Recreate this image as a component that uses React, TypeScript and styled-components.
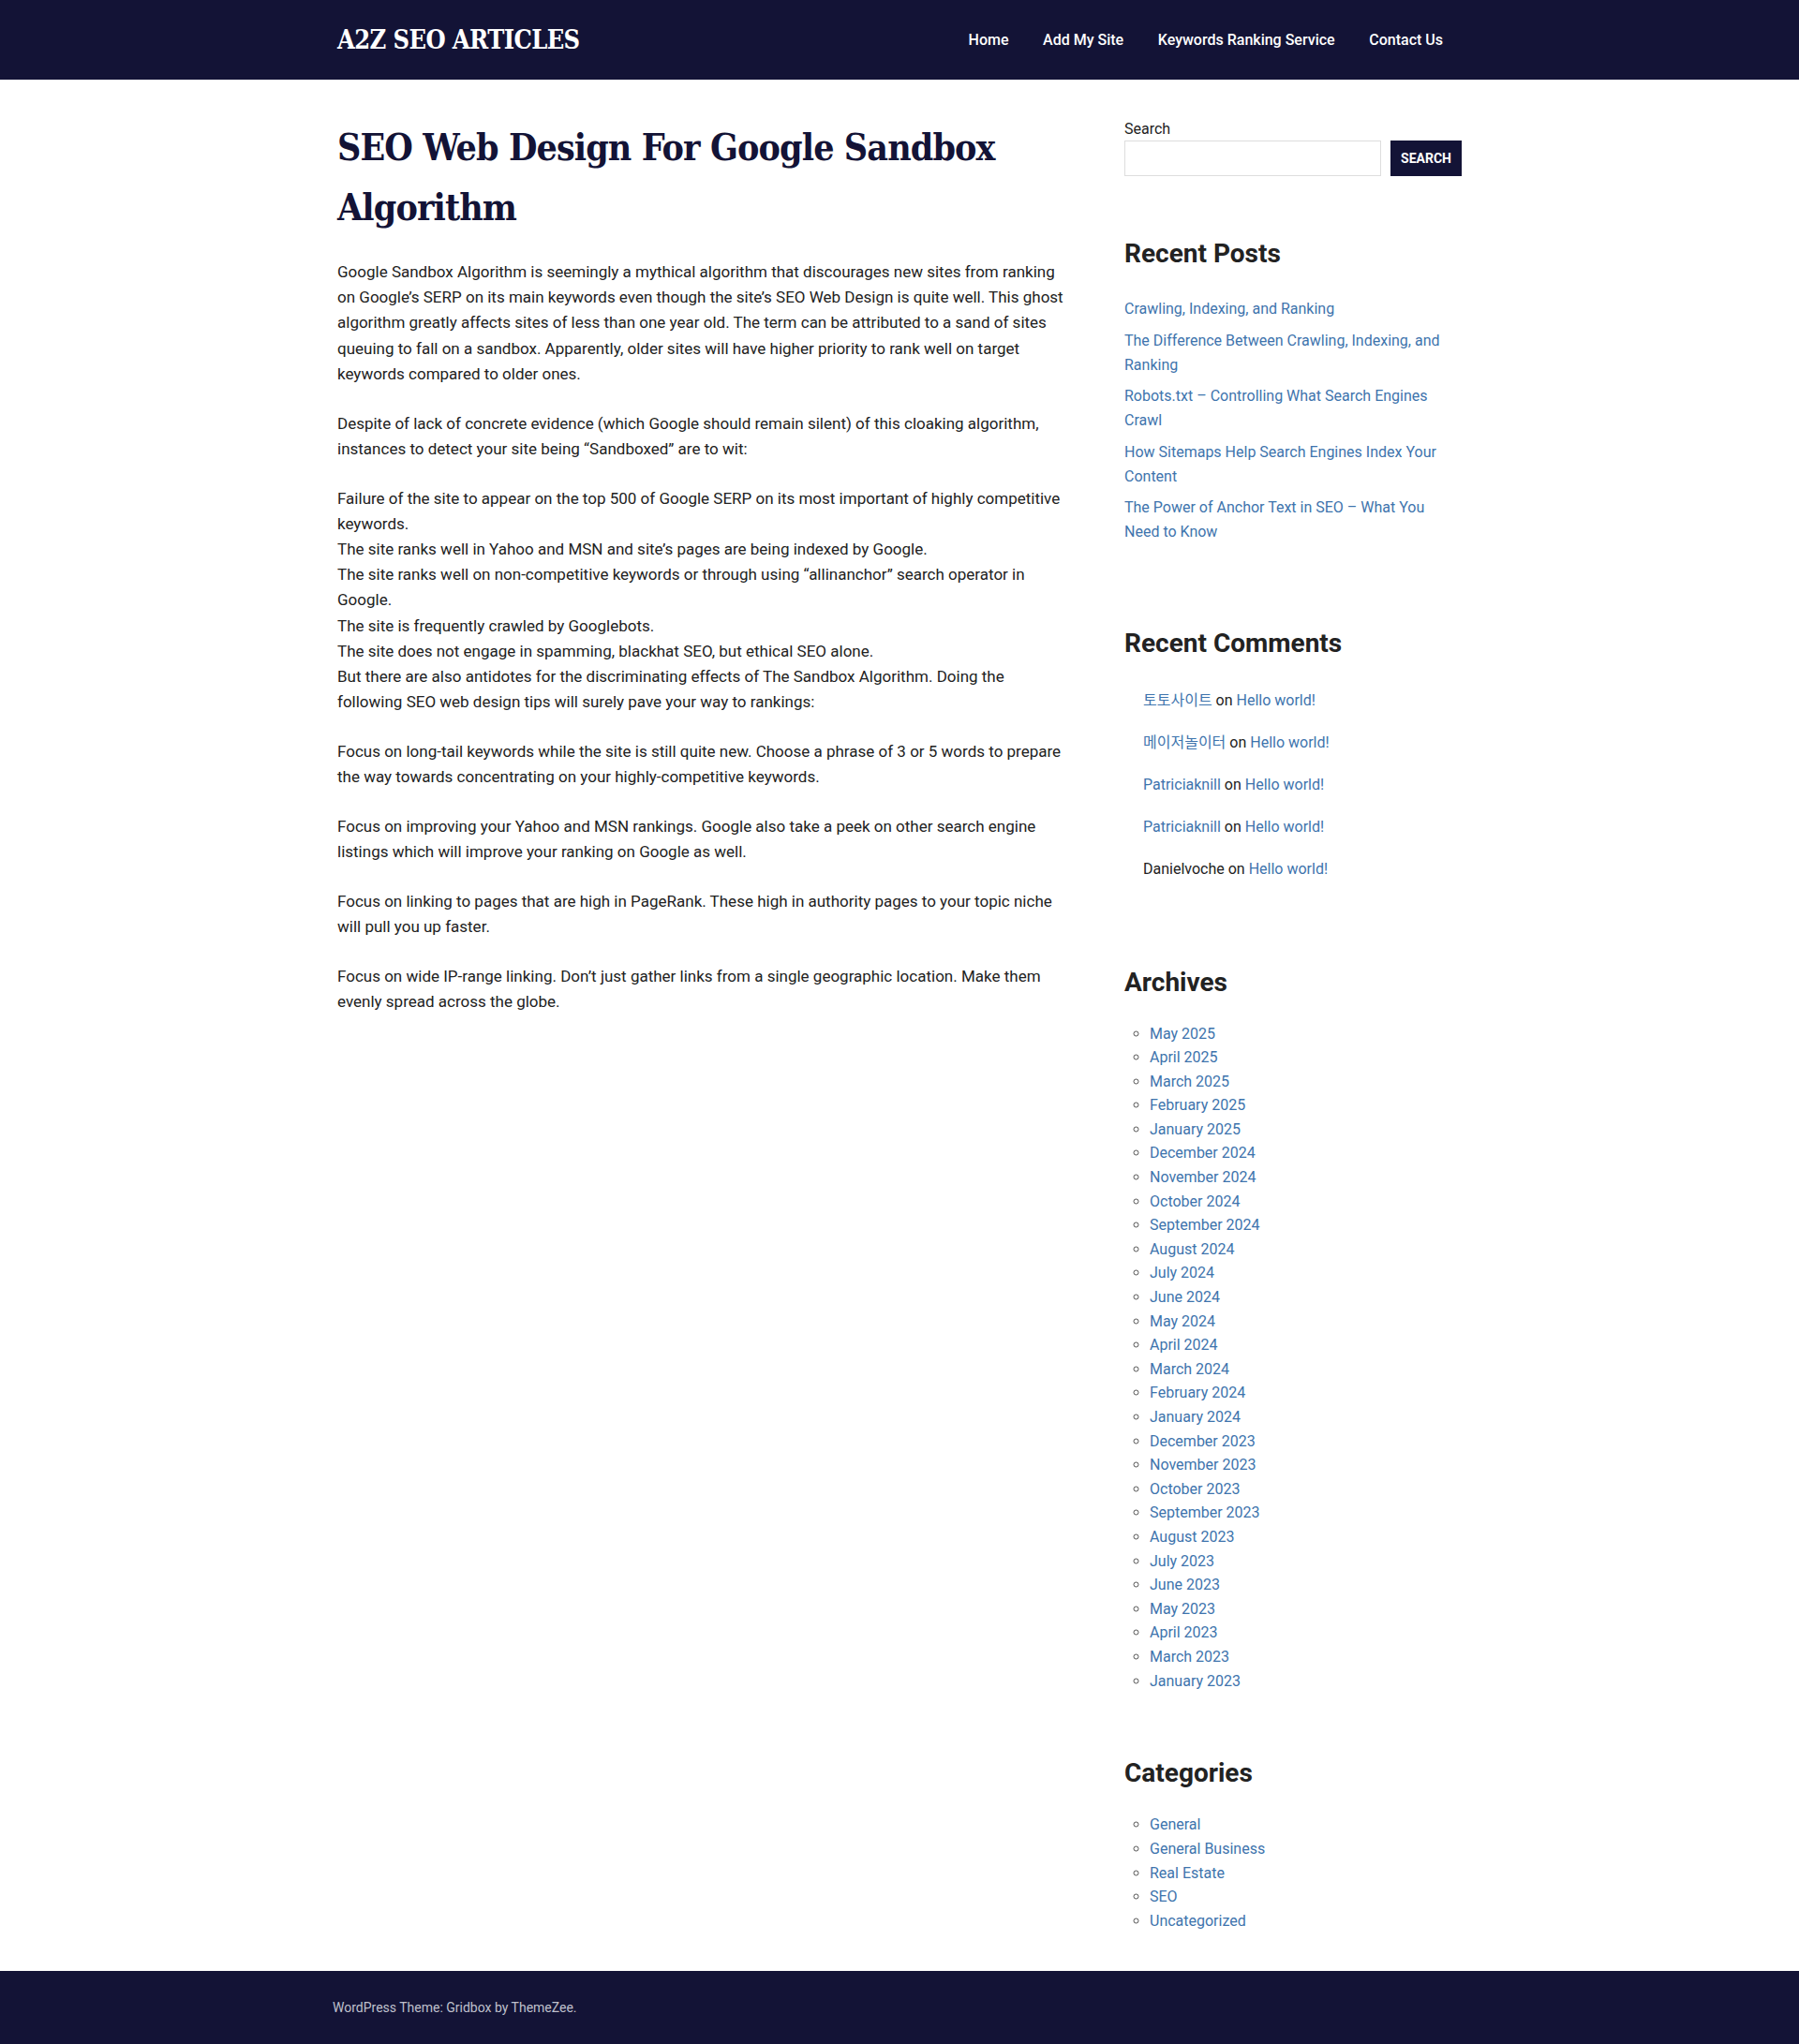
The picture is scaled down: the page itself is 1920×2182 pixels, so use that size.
import React from "react";
import styled, { createGlobalStyle } from "styled-components";

const NAVY = "#131336";
const LINK = "#3e74ad";
const TEXT = "#222222";

const Global = createGlobalStyle`
  html, body { margin: 0; padding: 0; background: #fff; }
  body {
    font-family: Roboto, "Noto Sans", "Liberation Sans", "Noto Sans CJK KR", sans-serif;
    font-size: 16px;
    color: ${TEXT};
  }
  * { box-sizing: border-box; }
  a { text-decoration: none; }
`;

const Header = styled.header`
  background: ${NAVY};
  height: 85px;
`;

const Container = styled.div<{ $width?: number }>`
  width: ${(p) => p.$width ?? 1200}px;
  margin: 0 auto;
`;

const HeaderInner = styled(Container)`
  height: 100%;
  display: flex;
  align-items: center;
  justify-content: space-between;
`;

const Logo = styled.a`
  font-family: "DejaVu Serif Condensed", "DejaVu Serif", serif;
  font-stretch: condensed;
  font-weight: 700;
  font-size: 27px;
  letter-spacing: -0.6px;
  color: #fff;
  line-height: 1;
`;

const Nav = styled.nav`
  display: flex;
  align-items: center;
`;

const NavLink = styled.a`
  color: #fff;
  font-size: 16px;
  font-weight: 500;
  padding: 0 18.3px;
  &:last-child { padding-right: 20px; }
`;

const Layout = styled(Container)`
  display: grid;
  grid-template-columns: 780px 360px;
  justify-content: space-between;
  padding: 40px 0 41px;
  align-items: start;
`;

const Article = styled.article``;

const Title = styled.h1`
  margin: 0 0 24px;
  font-family: "DejaVu Serif Condensed", "DejaVu Serif", serif;
  font-stretch: condensed;
  font-weight: 700;
  font-size: 39px;
  line-height: 64px;
  color: ${NAVY};
  letter-spacing: -0.9px;
`;

const Para = styled.p`
  margin: 0 0 25.6px;
  font-size: 17px;
  line-height: 27.2px;
  color: ${TEXT};
`;

const Sidebar = styled.aside`
  display: flex;
  flex-direction: column;
`;

const Widget = styled.section<{ $top?: number }>`
  margin-top: ${(p) => p.$top ?? 0}px;
`;

const WidgetTitle = styled.h2<{ $after: number }>`
  margin: 0 0 ${(p) => p.$after}px;
  font-size: 28px;
  font-weight: 700;
  line-height: 39px;
  color: ${TEXT};
`;

const SearchLabel = styled.label`
  display: block;
  font-size: 16px;
  line-height: 25px;
  color: ${TEXT};
`;

const SearchRow = styled.div`
  display: flex;
  gap: 10px;
  height: 38px;
`;

const SearchInput = styled.input`
  flex: 1;
  border: 1px solid #dddddd;
  background: #fff;
  height: 38px;
  padding: 0 10px;
  font: inherit;
`;

const SearchButton = styled.button`
  width: 76px;
  height: 38px;
  border: none;
  background: ${NAVY};
  color: #fff;
  font-family: Roboto, sans-serif;
  font-weight: 700;
  font-size: 14px;
  text-transform: uppercase;
  padding: 0;
`;

const PlainList = styled.ul`
  list-style: none;
  margin: 0;
  padding: 0;
`;

const PostItem = styled.li`
  font-size: 16px;
  line-height: 26px;
  margin-bottom: 7.5px;
`;

const Link = styled.a`
  color: ${LINK};
`;

const CommentList = styled.ol`
  list-style: none;
  margin: 0;
  padding: 0 0 0 20px;
`;

const CommentItem = styled.li`
  font-size: 16px;
  line-height: 26px;
  margin-bottom: 19px;
  &:last-child { margin-bottom: 0; }
`;

const BulletList = styled.ul`
  margin: 0;
  padding: 0 0 0 27px;
  list-style: circle;
  li::marker { color: #555; }
`;

const BulletItem = styled.li`
  font-size: 16px;
  line-height: 25.6px;
`;

const Footer = styled.footer`
  background: ${NAVY};
  height: 78px;
  display: flex;
  align-items: center;
`;

const FooterText = styled.div`
  font-size: 14px;
  color: #bfc0cc;
`;

const paragraphs: React.ReactNode[] = [
  "Google Sandbox Algorithm is seemingly a mythical algorithm that discourages new sites from ranking on Google\u2019s SERP on its main keywords even though the site\u2019s SEO Web Design is quite well. This ghost algorithm greatly affects sites of less than one year old. The term can be attributed to a sand of sites queuing to fall on a sandbox. Apparently, older sites will have higher priority to rank well on target keywords compared to older ones.",
  "Despite of lack of concrete evidence (which Google should remain silent) of this cloaking algorithm, instances to detect your site being \u201cSandboxed\u201d are to wit:",
  <>
    Failure of the site to appear on the top 500 of Google SERP on its most important of highly competitive keywords.
    <br />
    The site ranks well in Yahoo and MSN and site&rsquo;s pages are being indexed by Google.
    <br />
    The site ranks well on non-competitive keywords or through using &ldquo;allinanchor&rdquo; search operator in Google.
    <br />
    The site is frequently crawled by Googlebots.
    <br />
    The site does not engage in spamming, blackhat SEO, but ethical SEO alone.
    <br />
    But there are also antidotes for the discriminating effects of The Sandbox Algorithm. Doing the following SEO web design tips will surely pave your way to rankings:
  </>,
  "Focus on long-tail keywords while the site is still quite new. Choose a phrase of 3 or 5 words to prepare the way towards concentrating on your highly-competitive keywords.",
  "Focus on improving your Yahoo and MSN rankings. Google also take a peek on other search engine listings which will improve your ranking on Google as well.",
  "Focus on linking to pages that are high in PageRank. These high in authority pages to your topic niche will pull you up faster.",
  "Focus on wide IP-range linking. Don\u2019t just gather links from a single geographic location. Make them evenly spread across the globe.",
];

const recentPosts = [
  "Crawling, Indexing, and Ranking",
  "The Difference Between Crawling, Indexing, and Ranking",
  "Robots.txt \u2013 Controlling What Search Engines Crawl",
  "How Sitemaps Help Search Engines Index Your Content",
  "The Power of Anchor Text in SEO \u2013 What You Need to Know",
];

const comments: { author: string; linked: boolean }[] = [
  { author: "토토사이트", linked: true },
  { author: "메이저놀이터", linked: true },
  { author: "Patriciaknill", linked: true },
  { author: "Patriciaknill", linked: true },
  { author: "Danielvoche", linked: false },
];

const archives = [
  "May 2025", "April 2025", "March 2025", "February 2025", "January 2025",
  "December 2024", "November 2024", "October 2024", "September 2024", "August 2024",
  "July 2024", "June 2024", "May 2024", "April 2024", "March 2024", "February 2024",
  "January 2024", "December 2023", "November 2023", "October 2023", "September 2023",
  "August 2023", "July 2023", "June 2023", "May 2023", "April 2023", "March 2023",
  "January 2023",
];

const categories = ["General", "General Business", "Real Estate", "SEO", "Uncategorized"];

export default function App() {
  return (
    <>
      <Global />
      <Header>
        <HeaderInner>
          <Logo href="#">A2Z SEO ARTICLES</Logo>
          <Nav>
            <NavLink href="#">Home</NavLink>
            <NavLink href="#">Add My Site</NavLink>
            <NavLink href="#">Keywords Ranking Service</NavLink>
            <NavLink href="#">Contact Us</NavLink>
          </Nav>
        </HeaderInner>
      </Header>

      <Layout>
        <Article>
          <Title>SEO Web Design For Google Sandbox Algorithm</Title>
          {paragraphs.map((p, i) => (
            <Para key={i}>{p}</Para>
          ))}
        </Article>

        <Sidebar>
          <Widget>
            <SearchLabel htmlFor="s">Search</SearchLabel>
            <SearchRow>
              <SearchInput id="s" type="text" />
              <SearchButton type="button">Search</SearchButton>
            </SearchRow>
          </Widget>

          <Widget $top={62.5}>
            <WidgetTitle $after={27.5}>Recent Posts</WidgetTitle>
            <PlainList>
              {recentPosts.map((t) => (
                <PostItem key={t}>
                  <Link href="#">{t}</Link>
                </PostItem>
              ))}
            </PlainList>
          </Widget>

          <Widget $top={78.5}>
            <WidgetTitle $after={28.5}>Recent Comments</WidgetTitle>
            <CommentList>
              {comments.map((c, i) => (
                <CommentItem key={i}>
                  {c.linked ? <Link href="#">{c.author}</Link> : c.author} on{" "}
                  <Link href="#">Hello world!</Link>
                </CommentItem>
              ))}
            </CommentList>
          </Widget>

          <Widget $top={88.5}>
            <WidgetTitle $after={22.5}>Archives</WidgetTitle>
            <BulletList>
              {archives.map((a) => (
                <BulletItem key={a}>
                  <Link href="#">{a}</Link>
                </BulletItem>
              ))}
            </BulletList>
          </Widget>

          <Widget $top={65.7}>
            <WidgetTitle $after={23.5}>Categories</WidgetTitle>
            <BulletList>
              {categories.map((c) => (
                <BulletItem key={c}>
                  <Link href="#">{c}</Link>
                </BulletItem>
              ))}
            </BulletList>
          </Widget>
        </Sidebar>
      </Layout>

      <Footer>
        <Container $width={1210}>
          <FooterText>WordPress Theme: Gridbox by ThemeZee.</FooterText>
        </Container>
      </Footer>
    </>
  );
}
